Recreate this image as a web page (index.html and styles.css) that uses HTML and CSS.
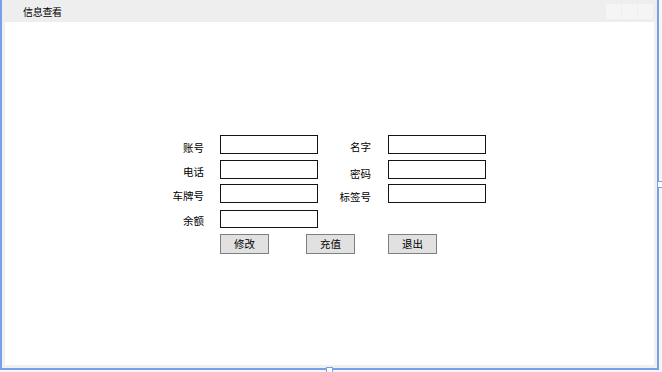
FILE: index.html
```html
<!DOCTYPE html>
<html lang="zh-CN">
<head>
<meta charset="utf-8">
<title>信息查看</title>
<link rel="stylesheet" href="styles.css">
</head>
<body>
<div class="designer">
  <div class="window">
    <div class="titlebar">
      <span class="title">信息查看</span>
      <div class="caption-buttons">
        <span class="cap"></span>
        <span class="cap"></span>
        <span class="cap"></span>
      </div>
    </div>
    <div class="client">
      <div class="form">
        <label class="lbl l1 o7">账号</label>
        <div class="field c2"><span class="input"></span></div>
        <label class="lbl l3 o6">名字</label>
        <div class="field c4"><span class="input"></span></div>

        <label class="lbl l1 o6">电话</label>
        <div class="field c2"><span class="input"></span></div>
        <label class="lbl l3 o8">密码</label>
        <div class="field c4"><span class="input"></span></div>

        <label class="lbl l1 o6">车牌号</label>
        <div class="field c2"><span class="input"></span></div>
        <label class="lbl l3 o7">标签号</label>
        <div class="field c4"><span class="input"></span></div>

        <label class="lbl l1 o5">余额</label>
        <div class="field c2"><span class="input short"></span></div>

        <div class="btn-group">
          <button class="btn">修改</button>
          <button class="btn">充值</button>
        </div>
        <div class="field c4"><button class="btn">退出</button></div>
      </div>
    </div>
  </div>
  <span class="handle handle-right"></span>
  <span class="handle handle-bottom"></span>
</div>
</body>
</html>
```
FILE: styles.css
```css
* { box-sizing: border-box; }

html, body {
  margin: 0;
  padding: 0;
}

body {
  width: 662px;
  height: 372px;
  overflow: hidden;
  background: #f6f6f6;
  font-family: "Noto Sans CJK SC", "Microsoft YaHei", sans-serif;
  color: #000;
}

.designer {
  position: relative;
  width: 659px;
  height: 370px;
  border-left: 2px solid #78a0ea;
  border-right: 2px solid #78a0ea;
  border-bottom: 2px solid #78a0ea;
}

.window {
  display: flex;
  flex-direction: column;
  height: 100%;
  background: #f0f0f0;
}

.titlebar {
  display: flex;
  justify-content: space-between;
  align-items: flex-start;
  height: 22px;
  padding: 0 4px 0 21px;
  background: #eeeeee;
}

.title {
  font-size: 10px;
  line-height: 12px;
  margin-top: 6px;
  letter-spacing: -0.3px;
}

.caption-buttons {
  display: flex;
  margin-top: 4px;
}

.cap {
  width: 16px;
  height: 15px;
  background: #f5f5f5;
  border-left: 1px solid #eeeeee;
}

.client {
  flex: 1;
  margin: 0 3px 3px 3px;
  background: #fff;
  padding: 113px 0 0 165px;
}

.form {
  display: grid;
  grid-template-columns: 50px 98px 70px 98px;
  grid-template-rows: 25px 24px 26px 24px 20px;
}

.lbl {
  align-self: start;
  justify-self: end;
  font-size: 10.5px;
  line-height: 12px;
  white-space: nowrap;
}

.l1 { grid-column: 1; padding-right: 16px; }
.l3 { grid-column: 3; padding-right: 17px; }

.o5 { padding-top: 5px; }
.o6 { padding-top: 6px; }
.o7 { padding-top: 7px; }
.o8 { padding-top: 8px; }

.field {
  display: flex;
  align-self: start;
}
.c2 { grid-column: 2; }
.c4 { grid-column: 4; }

.input {
  display: block;
  width: 98px;
  height: 19px;
  border: 1px solid #141414;
  background: #fff;
}

.input.short { height: 18px; }

.btn-group {
  grid-column: 2 / 4;
  display: flex;
  align-self: start;
  gap: 37px;
}

.btn {
  display: block;
  width: 49px;
  height: 20px;
  margin: 0;
  padding: 0;
  border: 1px solid #7f7f7f;
  background: #e1e1e1;
  font-family: inherit;
  font-size: 10.5px;
  line-height: 12px;
  color: #000;
}

.handle {
  position: absolute;
  width: 7px;
  height: 7px;
  background: #fff;
  border: 1px solid #78a0ea;
}

.handle-right {
  left: 655px;
  top: 181px;
}

.handle-bottom {
  left: 324px;
  top: 367px;
}
```
